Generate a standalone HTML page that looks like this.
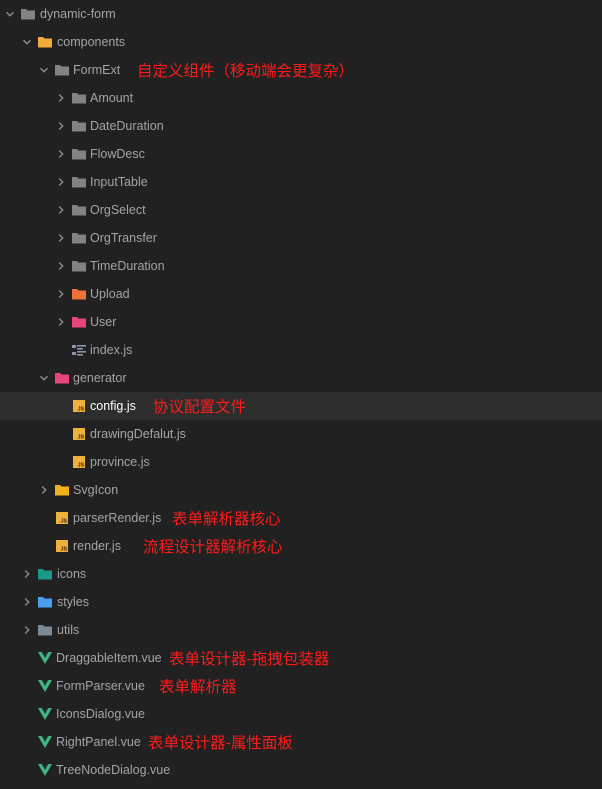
<!DOCTYPE html>
<html><head><meta charset="utf-8"><style>
body{margin:0;width:602px;height:789px;background:#212121;overflow:hidden;font-family:"Liberation Sans","Noto Sans CJK SC",sans-serif;position:relative}
.r{position:absolute;left:0;width:602px;height:28px}
.sel{background:#2d2d2e}
.t{position:absolute;top:6px;font-size:12.5px;color:#a4a4a4;line-height:16px;white-space:nowrap}
.sel .t{color:#fff}
.n{position:absolute;top:4px;font-size:15.5px;color:#ff1a1a;line-height:20px;white-space:nowrap;font-family:"Noto Sans CJK SC",sans-serif}
svg{position:absolute}
</style></head><body>
<svg width="0" height="0" style="position:absolute">
<defs>
<symbol id="dn" viewBox="0 0 10 10"><path d="M1.5 3.2 L5 6.7 L8.5 3.2" fill="none" stroke="#8c8c8c" stroke-width="1.4"/></symbol>
<symbol id="rt" viewBox="0 0 10 10"><path d="M3.2 1.5 L6.7 5 L3.2 8.5" fill="none" stroke="#8c8c8c" stroke-width="1.4"/></symbol>
<symbol id="fd" viewBox="0 0 16 16"><path d="M1 3h5l1.5 1.5H15v9H1z" fill="currentColor"/></symbol>
<symbol id="js" viewBox="0 0 16 16"><rect x="2" y="2" width="12" height="12" fill="#f0b13c"/><text x="6.5" y="12.5" font-size="5.5" font-family="Liberation Sans" font-weight="bold" fill="#3a2a10">JS</text></symbol>
<symbol id="vue" viewBox="0 0 16 16"><path d="M1 2h4l3 5 3-5h4L8 14z" fill="#41b883"/><path d="M4.5 2h2L8 4.6 9.5 2h2L8 8z" fill="#1f3a35"/></symbol>
<symbol id="idx" viewBox="0 0 16 16"><g fill="#8a96a3"><rect x="1" y="3" width="4" height="3"/><rect x="1" y="10" width="4" height="3"/><rect x="6" y="3" width="9" height="1.6"/><rect x="6" y="6" width="6" height="1.6"/><rect x="6" y="9" width="9" height="1.6"/><rect x="6" y="12" width="6" height="1.6"/></g></symbol>
</defs></svg>

<div class="r" style="top:0"><svg x="0" style="left:5px;top:9px" width="10" height="10"><use href="#dn"/></svg><svg style="left:20px;top:6px;color:#838383" width="16" height="16"><use href="#fd"/></svg><span class="t" style="left:40px">dynamic-form</span></div>
<div class="r" style="top:28px"><svg style="left:22px;top:9px" width="10" height="10"><use href="#dn"/></svg><svg style="left:37px;top:6px;color:#f3a83a" width="16" height="16"><use href="#fd"/></svg><span class="t" style="left:57px">components</span></div>
<div class="r" style="top:56px"><svg style="left:39px;top:9px" width="10" height="10"><use href="#dn"/></svg><svg style="left:54px;top:6px;color:#838383" width="16" height="16"><use href="#fd"/></svg><span class="t" style="left:73px">FormExt</span><span class="n" style="left:137px">自定义组件（移动端会更复杂）</span></div>

<div class="r" style="top:84px"><svg style="left:56px;top:9px" width="10" height="10"><use href="#rt"/></svg><svg style="left:71px;top:6px;color:#838383" width="16" height="16"><use href="#fd"/></svg><span class="t" style="left:90px">Amount</span></div>
<div class="r" style="top:112px"><svg style="left:56px;top:9px" width="10" height="10"><use href="#rt"/></svg><svg style="left:71px;top:6px;color:#838383" width="16" height="16"><use href="#fd"/></svg><span class="t" style="left:90px">DateDuration</span></div>
<div class="r" style="top:140px"><svg style="left:56px;top:9px" width="10" height="10"><use href="#rt"/></svg><svg style="left:71px;top:6px;color:#838383" width="16" height="16"><use href="#fd"/></svg><span class="t" style="left:90px">FlowDesc</span></div>
<div class="r" style="top:168px"><svg style="left:56px;top:9px" width="10" height="10"><use href="#rt"/></svg><svg style="left:71px;top:6px;color:#838383" width="16" height="16"><use href="#fd"/></svg><span class="t" style="left:90px">InputTable</span></div>
<div class="r" style="top:196px"><svg style="left:56px;top:9px" width="10" height="10"><use href="#rt"/></svg><svg style="left:71px;top:6px;color:#838383" width="16" height="16"><use href="#fd"/></svg><span class="t" style="left:90px">OrgSelect</span></div>
<div class="r" style="top:224px"><svg style="left:56px;top:9px" width="10" height="10"><use href="#rt"/></svg><svg style="left:71px;top:6px;color:#838383" width="16" height="16"><use href="#fd"/></svg><span class="t" style="left:90px">OrgTransfer</span></div>
<div class="r" style="top:252px"><svg style="left:56px;top:9px" width="10" height="10"><use href="#rt"/></svg><svg style="left:71px;top:6px;color:#838383" width="16" height="16"><use href="#fd"/></svg><span class="t" style="left:90px">TimeDuration</span></div>
<div class="r" style="top:280px"><svg style="left:56px;top:9px" width="10" height="10"><use href="#rt"/></svg><svg style="left:71px;top:6px;color:#f0703a" width="16" height="16"><use href="#fd"/></svg><span class="t" style="left:90px">Upload</span></div>
<div class="r" style="top:308px"><svg style="left:56px;top:9px" width="10" height="10"><use href="#rt"/></svg><svg style="left:71px;top:6px;color:#e8457a" width="16" height="16"><use href="#fd"/></svg><span class="t" style="left:90px">User</span></div>
<div class="r" style="top:336px"><svg style="left:71px;top:6px" width="16" height="16"><use href="#idx"/></svg><span class="t" style="left:90px">index.js</span></div>
<div class="r" style="top:364px"><svg style="left:39px;top:9px" width="10" height="10"><use href="#dn"/></svg><svg style="left:54px;top:6px;color:#e8457a" width="16" height="16"><use href="#fd"/></svg><span class="t" style="left:73px">generator</span></div>
<div class="r sel" style="top:392px"><svg style="left:71px;top:6px" width="16" height="16"><use href="#js"/></svg><span class="t" style="left:90px">config.js</span><span class="n" style="left:153px">协议配置文件</span></div>
<div class="r" style="top:420px"><svg style="left:71px;top:6px" width="16" height="16"><use href="#js"/></svg><span class="t" style="left:90px">drawingDefalut.js</span></div>
<div class="r" style="top:448px"><svg style="left:71px;top:6px" width="16" height="16"><use href="#js"/></svg><span class="t" style="left:90px">province.js</span></div>
<div class="r" style="top:476px"><svg style="left:39px;top:9px" width="10" height="10"><use href="#rt"/></svg><svg style="left:54px;top:6px;color:#f2b21c" width="16" height="16"><use href="#fd"/></svg><span class="t" style="left:73px">SvgIcon</span></div>
<div class="r" style="top:504px"><svg style="left:54px;top:6px" width="16" height="16"><use href="#js"/></svg><span class="t" style="left:73px">parserRender.js</span><span class="n" style="left:172px">表单解析器核心</span></div>
<div class="r" style="top:532px"><svg style="left:54px;top:6px" width="16" height="16"><use href="#js"/></svg><span class="t" style="left:73px">render.js</span><span class="n" style="left:143px">流程设计器解析核心</span></div>
<div class="r" style="top:560px"><svg style="left:22px;top:9px" width="10" height="10"><use href="#rt"/></svg><svg style="left:37px;top:6px;color:#1a9a86" width="16" height="16"><use href="#fd"/></svg><span class="t" style="left:57px">icons</span></div>
<div class="r" style="top:588px"><svg style="left:22px;top:9px" width="10" height="10"><use href="#rt"/></svg><svg style="left:37px;top:6px;color:#4a9df0" width="16" height="16"><use href="#fd"/></svg><span class="t" style="left:57px">styles</span></div>
<div class="r" style="top:616px"><svg style="left:22px;top:9px" width="10" height="10"><use href="#rt"/></svg><svg style="left:37px;top:6px;color:#7c8a96" width="16" height="16"><use href="#fd"/></svg><span class="t" style="left:57px">utils</span></div>
<div class="r" style="top:644px"><svg style="left:37px;top:6px" width="16" height="16"><use href="#vue"/></svg><span class="t" style="left:56px">DraggableItem.vue</span><span class="n" style="left:169px">表单设计器-拖拽包装器</span></div>
<div class="r" style="top:672px"><svg style="left:37px;top:6px" width="16" height="16"><use href="#vue"/></svg><span class="t" style="left:56px">FormParser.vue</span><span class="n" style="left:159px">表单解析器</span></div>
<div class="r" style="top:700px"><svg style="left:37px;top:6px" width="16" height="16"><use href="#vue"/></svg><span class="t" style="left:56px">IconsDialog.vue</span></div>
<div class="r" style="top:728px"><svg style="left:37px;top:6px" width="16" height="16"><use href="#vue"/></svg><span class="t" style="left:56px">RightPanel.vue</span><span class="n" style="left:148px">表单设计器-属性面板</span></div>
<div class="r" style="top:756px"><svg style="left:37px;top:6px" width="16" height="16"><use href="#vue"/></svg><span class="t" style="left:56px">TreeNodeDialog.vue</span></div>
</body></html>
